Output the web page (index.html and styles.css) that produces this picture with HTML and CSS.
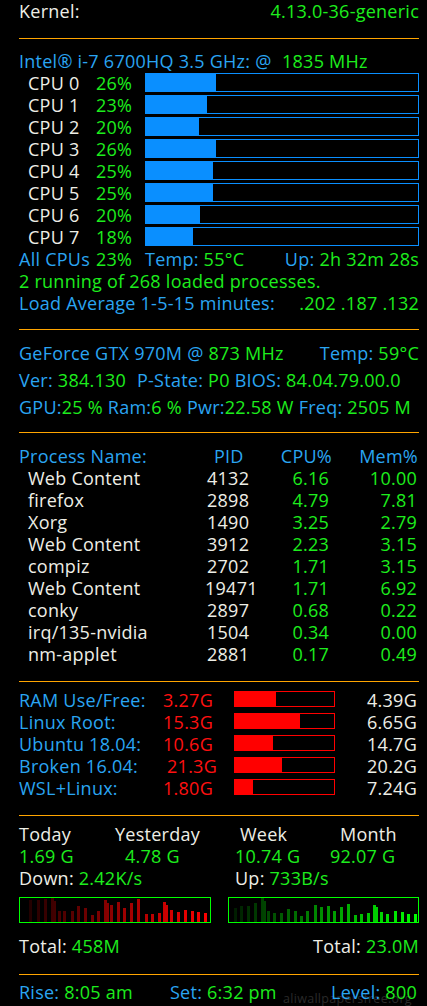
FILE: index.html
```html
<!DOCTYPE html>
<html>
<head>
<meta charset="utf-8">
<title>Conky</title>
<link rel="stylesheet" href="styles.css">
</head>
<body>
<div class="conky">
  <div class="watermark">aliwallpapersfree.org</div>

  <div class="row split"><span class="w">Kernel:</span><span class="g">4.13.0-36-generic</span></div>
  <div class="rule rule-1"></div>

  <div class="row"><span class="b intel">Intel® i-7 6700HQ 3.5 GHz: @</span><span class="g">1835 MHz</span></div>
  <div class="cpu"><span class="w">CPU 0</span><span class="g">26%</span><div class="bar"><div class="fill" style="width:70px"></div></div></div>
  <div class="cpu"><span class="w">CPU 1</span><span class="g">23%</span><div class="bar"><div class="fill" style="width:61px"></div></div></div>
  <div class="cpu"><span class="w">CPU 2</span><span class="g">20%</span><div class="bar"><div class="fill" style="width:53px"></div></div></div>
  <div class="cpu"><span class="w">CPU 3</span><span class="g">26%</span><div class="bar"><div class="fill" style="width:70px"></div></div></div>
  <div class="cpu"><span class="w">CPU 4</span><span class="g">25%</span><div class="bar"><div class="fill" style="width:67px"></div></div></div>
  <div class="cpu"><span class="w">CPU 5</span><span class="g">25%</span><div class="bar"><div class="fill" style="width:67px"></div></div></div>
  <div class="cpu"><span class="w">CPU 6</span><span class="g">20%</span><div class="bar"><div class="fill" style="width:54px"></div></div></div>
  <div class="cpu"><span class="w">CPU 7</span><span class="g">18%</span><div class="bar"><div class="fill" style="width:47px"></div></div></div>
  <div class="cpu-sum">
    <span class="b">All CPUs</span><span class="g">23%</span>
    <span class="tail"><span><span class="b">Temp: </span><span class="g">55°C</span></span><span><span class="b">Up: </span><span class="g">2h 32m 28s</span></span></span>
  </div>
  <div class="row"><span class="g">2 running of 268 loaded processes.</span></div>
  <div class="row split"><span class="b">Load Average 1-5-15 minutes:</span><span class="g">.202 .187 .132</span></div>
  <div class="rule rule-2"></div>

  <div class="row split gpu-row"><span><span class="b">GeForce GTX 970M @ </span><span class="g">873 MHz</span></span><span><span class="b">Temp: </span><span class="g">59°C</span></span></div>
  <div class="row gpu-row gap"><span class="ver"><span class="b">Ver: </span><span class="g">384.130</span></span><span><span class="b">P-State: </span><span class="g">P0 </span><span class="b">BIOS: </span><span class="g">84.04.79.00.0</span></span></div>
  <div class="row gpu-row gap"><span><span class="b">GPU:</span><span class="g">25 % </span><span class="b">Ram:</span><span class="g">6 % </span><span class="b">Pwr:</span><span class="g">22.58 W </span><span class="b">Freq: </span><span class="g">2505 M</span></span></div>
  <div class="rule rule-3"></div>

  <div class="prow head"><span class="b">Process Name:</span><span class="b pid">PID</span><span class="b num">CPU%</span><span class="b num mem">Mem%</span></div>
  <div class="prow"><span class="w name">Web Content</span><span class="w">4132</span><span class="g num">6.16</span><span class="g num mem">10.00</span></div>
  <div class="prow"><span class="w name">firefox</span><span class="w">2898</span><span class="g num">4.79</span><span class="g num mem">7.81</span></div>
  <div class="prow"><span class="w name">Xorg</span><span class="w">1490</span><span class="g num">3.25</span><span class="g num mem">2.79</span></div>
  <div class="prow"><span class="w name">Web Content</span><span class="w">3912</span><span class="g num">2.23</span><span class="g num mem">3.15</span></div>
  <div class="prow"><span class="w name">compiz</span><span class="w">2702</span><span class="g num">1.71</span><span class="g num mem">3.15</span></div>
  <div class="prow"><span class="w name">Web Content</span><span class="w wide">19471</span><span class="g num">1.71</span><span class="g num mem">6.92</span></div>
  <div class="prow"><span class="w name">conky</span><span class="w">2897</span><span class="g num">0.68</span><span class="g num mem">0.22</span></div>
  <div class="prow"><span class="w name">irq/135-nvidia</span><span class="w">1504</span><span class="g num">0.34</span><span class="g num mem">0.00</span></div>
  <div class="prow"><span class="w name">nm-applet</span><span class="w">2881</span><span class="g num">0.17</span><span class="g num mem">0.49</span></div>
  <div class="rule rule-4"></div>

  <div class="drow"><span class="b">RAM Use/Free:</span><span class="r num">3.27G</span><div class="rbar"><div class="rfill" style="width:41px"></div></div><span class="w num">4.39G</span></div>
  <div class="drow"><span class="b">Linux Root:</span><span class="r num">15.3G</span><div class="rbar"><div class="rfill" style="width:65px"></div></div><span class="w num">6.65G</span></div>
  <div class="drow"><span class="b">Ubuntu 18.04:</span><span class="r num">10.6G</span><div class="rbar"><div class="rfill" style="width:38px"></div></div><span class="w num">14.7G</span></div>
  <div class="drow"><span class="b">Broken 16.04:</span><span class="r num shift">21.3G</span><div class="rbar"><div class="rfill" style="width:47px"></div></div><span class="w num">20.2G</span></div>
  <div class="drow"><span class="b">WSL+Linux:</span><span class="r num">1.80G</span><div class="rbar"><div class="rfill" style="width:18px"></div></div><span class="w num">7.24G</span></div>
  <div class="rule rule-5"></div>

  <div class="net">
    <span class="w">Today</span><span class="w">Yesterday</span><span class="w pad5">Week</span><span class="w pad10">Month</span>
    <span class="g">1.69 G</span><span class="g pad10">4.78 G</span><span class="g">10.74 G</span><span class="g">92.07 G</span>
    <span class="span2"><span class="w">Down: </span><span class="g">2.42K/s</span></span><span class="span2"><span class="w">Up: </span><span class="g">733B/s</span></span>
  </div>
  <div class="graphs">
    <svg class="graph" width="192" height="26" viewBox="0 0 192 26">
      <defs>
        <linearGradient id="redg" gradientUnits="userSpaceOnUse" x1="0" y1="0" x2="190" y2="0">
          <stop offset="0" stop-color="#140000"/>
          <stop offset="0.5" stop-color="#900000"/>
          <stop offset="1" stop-color="#ff0000"/>
        </linearGradient>
      </defs>
      <g fill="url(#redg)">
        <rect x="10" y="3" width="3" height="22"/>
        <rect x="18" y="3" width="3" height="22"/>
        <rect x="25" y="2" width="3" height="23"/>
        <rect x="32" y="1" width="3" height="24"/>
        <rect x="35" y="4" width="2" height="21"/>
        <rect x="39" y="14" width="3" height="11"/>
        <rect x="44" y="14" width="3" height="11"/>
        <rect x="52" y="14" width="3" height="11"/>
        <rect x="58" y="9" width="3" height="16"/>
        <rect x="65" y="11" width="3" height="14"/>
        <rect x="72" y="18" width="3" height="7"/>
        <rect x="78" y="14" width="3" height="11"/>
        <rect x="85" y="3" width="3" height="22"/>
        <rect x="88" y="6" width="2" height="19"/>
        <rect x="91" y="8" width="3" height="17"/>
        <rect x="98" y="5" width="3" height="20"/>
        <rect x="104" y="11" width="3" height="14"/>
        <rect x="111" y="6" width="3" height="19"/>
        <rect x="118" y="2" width="3" height="23"/>
        <rect x="126" y="17" width="3" height="8"/>
        <rect x="132" y="17" width="3" height="8"/>
        <rect x="139" y="16" width="3" height="9"/>
        <rect x="144" y="5" width="3" height="20"/>
        <rect x="147" y="8" width="2" height="17"/>
        <rect x="151" y="13" width="3" height="12"/>
        <rect x="158" y="15" width="3" height="10"/>
        <rect x="165" y="13" width="3" height="12"/>
        <rect x="172" y="14" width="3" height="11"/>
        <rect x="178" y="15" width="3" height="10"/>
        <rect x="185" y="16" width="3" height="9"/>
      </g>
      <rect x="0.5" y="0.5" width="191" height="25" fill="none" stroke="#00ff00" stroke-width="1"/>
    </svg>
    <svg class="graph" width="191" height="26" viewBox="0 0 191 26">
      <defs>
        <linearGradient id="greeng" gradientUnits="userSpaceOnUse" x1="0" y1="0" x2="190" y2="0">
          <stop offset="0" stop-color="#001400"/>
          <stop offset="0.5" stop-color="#009000"/>
          <stop offset="1" stop-color="#00ff00"/>
        </linearGradient>
      </defs>
      <g fill="url(#greeng)">
        <rect x="6" y="11" width="3" height="14"/>
        <rect x="12" y="9" width="3" height="16"/>
        <rect x="19" y="9" width="3" height="16"/>
        <rect x="26" y="6" width="3" height="19"/>
        <rect x="33" y="1" width="3" height="24"/>
        <rect x="36" y="4" width="2" height="21"/>
        <rect x="39" y="14" width="3" height="11"/>
        <rect x="45" y="16" width="3" height="9"/>
        <rect x="52" y="16" width="3" height="9"/>
        <rect x="59" y="12" width="3" height="13"/>
        <rect x="66" y="14" width="3" height="11"/>
        <rect x="72" y="19" width="3" height="6"/>
        <rect x="78" y="14" width="3" height="11"/>
        <rect x="86" y="8" width="3" height="17"/>
        <rect x="92" y="10" width="3" height="15"/>
        <rect x="99" y="9" width="3" height="16"/>
        <rect x="105" y="14" width="3" height="11"/>
        <rect x="112" y="10" width="3" height="15"/>
        <rect x="119" y="7" width="3" height="18"/>
        <rect x="126" y="18" width="3" height="7"/>
        <rect x="132" y="17" width="3" height="8"/>
        <rect x="139" y="16" width="3" height="9"/>
        <rect x="145" y="8" width="3" height="17"/>
        <rect x="148" y="10" width="2" height="15"/>
        <rect x="152" y="15" width="3" height="10"/>
        <rect x="158" y="17" width="3" height="8"/>
        <rect x="166" y="14" width="3" height="11"/>
        <rect x="173" y="15" width="3" height="10"/>
        <rect x="179" y="17" width="3" height="8"/>
        <rect x="186" y="17" width="3" height="8"/>
      </g>
      <rect x="0.5" y="0.5" width="190" height="25" fill="none" stroke="#00ff00" stroke-width="1"/>
    </svg>
  </div>
  <div class="row split totals"><span><span class="w">Total: </span><span class="g">458M</span></span><span><span class="w">Total: </span><span class="g">23.0M</span></span></div>
  <div class="rule rule-6"></div>

  <div class="sun"><span><span class="b">Rise: </span><span class="g">8:05 am</span></span><span><span class="b">Set: </span><span class="g">6:32 pm</span></span><span class="lvl"><span class="b">Level: </span><span class="g">800</span></span></div>
</div>
</body>
</html>
```

FILE: styles.css
```css
html, body {
  margin: 0;
  padding: 0;
}
body {
  background: #000;
  font-family: "Open Sans", "Noto Sans", sans-serif;
  font-size: 18px;
  line-height: 22px;
  letter-spacing: 0.25px;
  color: #eeeee6;
}
.conky {
  position: relative;
  z-index: 0;
  width: 400px;
  height: 1006px;
  padding: 0 8px 0 19px;
  overflow: hidden;
}
.watermark {
  position: absolute;
  z-index: -1;
  left: 283px;
  top: 992px;
  font-size: 12.5px;
  line-height: 14px;
  letter-spacing: 0.3px;
  color: #2a2a2a;
}
.b { color: #2aa5f2; }
.g { color: #1ded1d; }
.w { color: #eeeee6; }
.r { color: #ff1010; }

.row {
  display: flex;
  height: 22px;
  white-space: nowrap;
}
.split { justify-content: space-between; }

.rule { height: 1px; background: #ffa500; }
.rule-1 { margin: 16px 0 11px; }
.rule-2 { margin: 15px 0 12px; }
.rule-3 { margin: 14px 0 12px; }
.rule-4 { margin: 16px 0 7px; }
.rule-5 { margin: 16px 0 7px; }
.rule-6 { margin: 17px 0 6px; }

.intel { display: inline-block; width: 263px; }

/* CPU rows */
.cpu {
  display: grid;
  grid-template-columns: 68px 49px 1fr;
  height: 22px;
  padding-left: 9px;
  white-space: nowrap;
}
.bar {
  margin-top: 1px;
  height: 17px;
  border: 1px solid #0a8fff;
  display: flex;
}
.fill { height: 100%; background: #0a8fff; }

.cpu-sum {
  display: grid;
  grid-template-columns: 77px 49px 1fr;
  height: 22px;
  white-space: nowrap;
}
.tail { display: flex; justify-content: space-between; }

/* GPU */
.gap { margin-top: 5px; }
.ver { display: inline-block; width: 118px; }

/* processes */
.prow {
  display: grid;
  grid-template-columns: 188px 55px 70px 1fr;
  height: 22px;
  white-space: nowrap;
}
.prow .name { padding-left: 9px; }
.prow .wide { margin-left: -2px; }
.prow .num { text-align: right; padding-right: 3px; }
.prow .mem { padding-right: 2px; }
.head .pid { padding-left: 7px; }
.head .num { padding-right: 0; }
.head .mem { padding-right: 1px; }

/* disks */
.drow {
  display: grid;
  grid-template-columns: 140px 54px 122px 1fr;
  height: 22px;
  white-space: nowrap;
}
.drow .num { text-align: right; }
.drow .shift { margin-right: -4px; }
.drow .w.num { padding-right: 2px; }
.rbar {
  justify-self: end;
  width: 99px;
  height: 14px;
  margin-top: 2px;
  border: 1px solid #ff0000;
  display: flex;
}
.rfill { height: 100%; background: #ff0000; }

/* network */
.net {
  display: grid;
  grid-template-columns: 96px 120px 95px 1fr;
  grid-auto-rows: 22px;
  white-space: nowrap;
}
.pad5 { padding-left: 5px; }
.pad10 { padding-left: 10px; }
.span2 { grid-column: span 2; }
.graphs {
  display: flex;
  justify-content: space-between;
  margin-top: 8px;
  height: 26px;
}
.graph { display: block; }
.totals { margin-top: 12px; }

.sun {
  display: grid;
  grid-template-columns: 151px auto 1fr;
  height: 22px;
  white-space: nowrap;
}
.lvl { justify-self: end; padding-right: 2px; }
```
